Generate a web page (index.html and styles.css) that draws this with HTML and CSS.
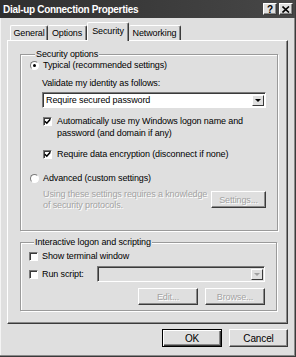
FILE: index.html
```html
<!DOCTYPE html>
<html lang="en">
<head>
  <meta charset="UTF-8">
  <title>Dial-up Connection Properties</title>
  <link rel="stylesheet" href="styles.css">
</head>
<body>
  <div class="window">

    <div class="titlebar">
      <span class="title">Dial-up Connection Properties</span>
      <span class="tbtn">?</span>
      <span class="tbtn close">
        <svg width="8" height="7" viewBox="0 0 8 7"><path d="M0.5 0.5 L7 6.5 M7 0.5 L0.5 6.5" stroke="#000" stroke-width="1.6"/></svg>
      </span>
    </div>

    <div class="tabs">
      <div class="tab t-general">General</div>
      <div class="tab t-options">Options</div>
      <div class="tab t-security active">Security</div>
      <div class="tab t-network">Networking</div>
    </div>

    <div class="panel">

      <fieldset class="group g-security">
        <legend>Security options</legend>

        <div class="opt">
          <span class="radio on"></span>
          <span>Typical (recommended settings)</span>
        </div>

        <div class="indent">
          <div class="label">Validate my identity as follows:</div>
          <div class="combo">
            <span class="combo-text">Require secured password</span>
            <span class="arrow"><i></i></span>
          </div>

          <div class="opt check-row first">
            <span class="check on"><svg width="7" height="7" viewBox="0 0 7 7"><path d="M0.8 3.2 L2.8 5.2 L6.3 1.2" fill="none" stroke="#000" stroke-width="1.6"/></svg></span>
            <span>Automatically use my Windows logon name and password (and domain if any)</span>
          </div>

          <div class="opt check-row second">
            <span class="check on"><svg width="7" height="7" viewBox="0 0 7 7"><path d="M0.8 3.2 L2.8 5.2 L6.3 1.2" fill="none" stroke="#000" stroke-width="1.6"/></svg></span>
            <span>Require data encryption (disconnect if none)</span>
          </div>
        </div>

        <div class="opt adv">
          <span class="radio"></span>
          <span>Advanced (custom settings)</span>
        </div>

        <div class="adv-row">
          <div class="note disabled">Using these settings requires a knowledge of security protocols.</div>
          <button class="btn disabled btn-settings">Settings...</button>
        </div>
      </fieldset>

      <fieldset class="group g-script">
        <legend>Interactive logon and scripting</legend>

        <div class="opt">
          <span class="check"></span>
          <span>Show terminal window</span>
        </div>

        <div class="opt script-row">
          <span class="check"></span>
          <span class="script-label">Run script:</span>
          <div class="combo off">
            <span class="combo-text"></span>
            <span class="arrow"><i></i></span>
          </div>
        </div>

        <div class="script-btns">
          <button class="btn disabled btn-edit">Edit...</button>
          <button class="btn disabled btn-browse">Browse...</button>
        </div>
      </fieldset>

    </div>

    <div class="footer">
      <button class="btn default">OK</button>
      <button class="btn">Cancel</button>
    </div>

  </div>
</body>
</html>
```

FILE: styles.css
```css
* { box-sizing: border-box; margin: 0; padding: 0; }
body { background: #dfdfdf; color: #000; font: 9px/11px "Liberation Sans", Arial, sans-serif; letter-spacing: -0.12px; }

.window { width: 296px; height: 357px; display: flex; flex-direction: column; border-right: 1px solid #3a3a3a; border-bottom: 1px solid #3a3a3a; box-shadow: inset -1px -1px #8a8a8a, inset 1px 0 #f4f4f4; }

/* title bar */
.titlebar { height: 18px; display: flex; align-items: center; gap: 1px; padding: 0 2px 0 3px; background: linear-gradient(90deg, #2f2f2f, #474747); color: #fff; font-weight: bold; font-size: 10px; }
.title { flex: 1; letter-spacing: -0.3px; }
.tbtn { width: 14px; height: 12px; display: flex; align-items: center; justify-content: center; background: #dfdfdf; color: #000; font-size: 10px; font-weight: bold; border: 1px solid; border-color: #fff #3a3a3a #3a3a3a #fff; box-shadow: inset -1px -1px #8a8a8a; }
.close { margin-left: 1px; }

/* tabs */
.tabs { display: flex; align-items: flex-end; height: 18px; margin-top: 4px; padding-left: 10px; position: relative; z-index: 1; }
.tab { height: 15px; display: flex; align-items: center; justify-content: center; border: 1px solid; border-bottom: none; border-color: #fff #3a3a3a #3a3a3a #fff; border-radius: 2px 2px 0 0; box-shadow: inset -1px 0 #8a8a8a; background: #dfdfdf; }
.t-general { width: 38px; }
.t-options { width: 39px; border-left: none; }
.t-security { width: 42px; }
.t-network { width: 52px; border-left: none; }
.tab.active { height: 19px; margin-bottom: -1px; padding-bottom: 2px; }

/* page */
.panel { height: 284px; margin: 0 7px; border: 1px solid; border-color: #fff #3a3a3a #3a3a3a #fff; box-shadow: inset -1px -1px #8a8a8a; padding: 8px 10px 0 12px; }

.group { border: 1px solid #9a9a9a; box-shadow: inset 1px 1px #fff, 1px 1px #fff; padding: 0 11px 0 9px; }
.group legend { margin-left: 5px; padding: 0 1px; background: #dfdfdf; line-height: 11px; }
.g-security { height: 182px; }
.g-script { height: 74px; margin-top: 6px; padding-left: 8px; }

.opt { display: flex; align-items: center; gap: 4px; }
.indent { padding-left: 12px; }
.label { margin-top: 7px; }

.radio { width: 9px; height: 9px; border-radius: 50%; background: #fff; border: 1px solid; border-color: #7a7a7a #fff #fff #7a7a7a; display: flex; align-items: center; justify-content: center; flex: none; }
.radio.on::after { content: ""; width: 3px; height: 3px; border-radius: 50%; background: #000; }

.check { width: 9px; height: 9px; background: #fff; border: 1px solid; border-color: #7a7a7a #fff #fff #7a7a7a; box-shadow: inset 1px 1px #3a3a3a; display: flex; align-items: center; justify-content: center; flex: none; }

.combo { height: 16px; margin-top: 3px; display: flex; background: #fff; border: 1px solid; border-color: #7a7a7a #fff #fff #7a7a7a; box-shadow: inset 1px 1px #3a3a3a; padding: 2px 1px 1px 2px; }
.combo-text { flex: 1; line-height: 11px; padding-left: 1px; }
.arrow { width: 12px; background: #dfdfdf; border: 1px solid; border-color: #fff #3a3a3a #3a3a3a #fff; display: flex; align-items: center; justify-content: center; }
.arrow i { width: 0; height: 0; border-left: 3px solid transparent; border-right: 3px solid transparent; border-top: 3px solid #000; }
.combo.off { background: #dfdfdf; flex: 1; margin: 0 0 0 auto; max-width: 168px; }
.combo.off .arrow i { border-top-color: #a0a0a0; }

.check-row { align-items: flex-start; gap: 5px; line-height: 12px; padding-left: 1px; }
.check-row .check { margin-top: 2px; }
.check-row.first { margin-top: 7px; }
.check-row.second { margin-top: 9px; }
.adv { margin-top: 12px; line-height: 12px; }

.disabled { color: #a3a3a3; text-shadow: 1px 1px #fff; }
.adv-row { display: flex; align-items: flex-start; margin-top: 5px; padding-left: 13px; }
.note { width: 168px; line-height: 11px; }
.btn { font: 9px "Liberation Sans", Arial, sans-serif; letter-spacing: -0.12px; height: 17px; background: #dfdfdf; border: 1px solid; border-color: #fff #3a3a3a #3a3a3a #fff; box-shadow: inset -1px -1px #8a8a8a; }
.btn-settings { width: 55px; margin: 2px 0 0 auto; }

.g-script .opt { margin-top: 3px; line-height: 11px; }
.g-script .script-row { margin-top: 4px; }
.script-label { width: 50px; }
.script-row .combo { margin-top: 0; }
.script-btns { display: flex; justify-content: flex-end; gap: 7px; margin-top: 6px; }
.btn-edit, .btn-browse { width: 60px; }

.footer { display: flex; justify-content: flex-end; gap: 7px; padding: 5px 7px 0 0; }
.footer .btn { width: 59px; height: 18px; font-size: 10px; }
.btn.default { border-color: #000; box-shadow: inset 1px 1px #fff, inset -1px -1px #3a3a3a, inset -2px -2px #8a8a8a; width: 60px; }
```
